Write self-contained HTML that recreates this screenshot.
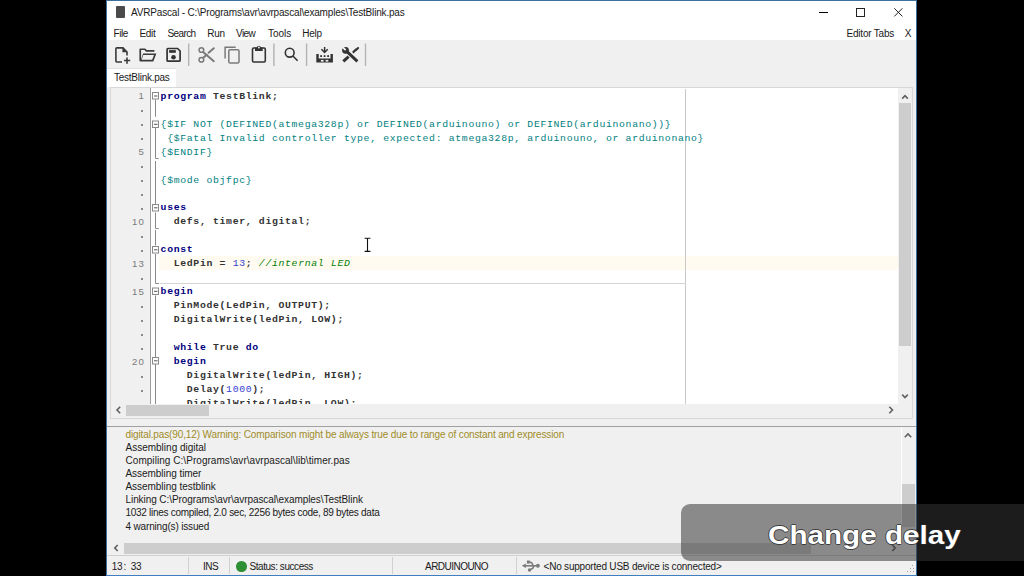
<!DOCTYPE html>
<html><head><meta charset="utf-8">
<style>
*{margin:0;padding:0;box-sizing:border-box}
html,body{width:1024px;height:576px;overflow:hidden;background:#000}
body{position:relative;font-family:"Liberation Sans",sans-serif;color:#000}
.a{position:absolute}
.ui{position:absolute;font-family:"Liberation Sans",sans-serif;font-size:10px;line-height:12px;white-space:pre;color:#1a1a1a}
.code{font-family:"Liberation Mono",monospace;font-size:9.8px;letter-spacing:0.67px;white-space:pre;line-height:13.93px}
.kw{color:#000080;font-weight:bold}
.id{color:#333;font-weight:bold}
.dir{color:#008080}
.num{color:#3340d0}
.cm{color:#008000;font-style:italic}
.lnum{position:absolute;font-family:"Liberation Sans",sans-serif;font-size:9.6px;line-height:13.93px;color:#7a7a7a;text-align:right;letter-spacing:1.2px}
.gdot{position:absolute;width:2px;height:2px;background:#8a8a8a}
svg{position:absolute;overflow:visible}
</style></head><body>
<!-- window frame -->
<div class="a" style="left:106px;top:0;width:811px;height:576px;background:#f0f0f0;border:1px solid #3f6f9f;border-bottom-color:#3f7fbf"></div>
<!-- title bar -->
<div class="a" style="left:107px;top:1px;width:809px;height:21px;background:#fff"></div>
<div class="a" style="left:116px;top:6px;width:9px;height:12px;background:#4a4a4a;border-radius:1px"></div>
<div class="ui" style="left:131px;top:6.5px;letter-spacing:-0.18px">AVRPascal - C:\Programs\avr\avrpascal\examples\TestBlink.pas</div>
<div class="a" style="left:819px;top:12px;width:9px;height:1px;background:#000"></div>
<div class="a" style="left:856px;top:8px;width:8.6px;height:8.6px;border:1px solid #222"></div>
<svg style="left:894px;top:8px" width="9" height="9"><path d="M0.3 0.3L8.4 8.4M8.4 0.3L0.3 8.4" stroke="#222" stroke-width="1"/></svg>
<!-- menu bar -->
<div class="a" style="left:107px;top:22px;width:809px;height:18px;background:#fff"></div>
<div class="ui" style="left:113.5px;top:27.5px;letter-spacing:-0.41px">File</div>
<div class="ui" style="left:139.5px;top:27.5px;letter-spacing:-0.31px">Edit</div>
<div class="ui" style="left:167.5px;top:27.5px;letter-spacing:-0.62px">Search</div>
<div class="ui" style="left:207.2px;top:27.5px;letter-spacing:-0.24px">Run</div>
<div class="ui" style="left:236px;top:27.5px;letter-spacing:-0.59px">View</div>
<div class="ui" style="left:268px;top:27.5px;letter-spacing:0px">Tools</div>
<div class="ui" style="left:302.3px;top:27.5px;letter-spacing:-0.27px">Help</div>
<div class="ui" style="left:846.5px;top:27.5px;letter-spacing:-0.2px">Editor Tabs</div>
<div class="ui" style="left:904.8px;top:27.5px">X</div>
<!-- toolbar (bg is window color) -->
<!-- new file -->
<svg style="left:0;top:0" width="1024" height="576">
 <g fill="none" stroke="#3a3a3a" stroke-width="1.6">
  <path d="M122 62H116.8Q115.9 62 115.9 61.1V48.7Q115.9 47.9 116.8 47.9H123L127 52V55.5"/>
  <path d="M127 57.4V63.7M124 60.5H130.2"/>
 </g>
 <path d="M122.4 47.6L127.6 52.2H122.4Z" fill="#3a3a3a"/>
 <!-- open folder -->
 <path d="M139.4 49.3Q139.4 48.4 140.3 48.4H145.2L146.8 50H154.4V51.7H146L144.5 50.1H141.1V59.6L143.1 53.4H156.4L153.3 61.5H140.3Q139.4 61.5 139.4 60.6Z M141.6 59.8H152.1L154 55.1H143.3Z" fill="#3a3a3a" fill-rule="evenodd"/>
 <!-- save -->
 <g fill="none" stroke="#333" stroke-width="1.7">
  <path d="M167.9 48.5H177.6L180.1 51V60.2Q180.1 61.2 179.1 61.2H168Q167.1 61.2 167.1 60.2V49.4Q167.1 48.5 167.9 48.5Z"/>
 </g>
 <rect x="169.1" y="50.1" width="6.7" height="2.7" fill="#333"/>
 <circle cx="173.5" cy="57.2" r="2.3" fill="#333"/>
 <!-- separators -->
 <rect x="188" y="43.5" width="1.4" height="22.5" fill="#b4b4b4"/>
 <rect x="273.2" y="43.5" width="1.4" height="22.5" fill="#b4b4b4"/>
 <rect x="305.9" y="43.5" width="1.4" height="22.5" fill="#b4b4b4"/>
 <rect x="364.8" y="43.5" width="1.4" height="22.5" fill="#b4b4b4"/>
 <!-- scissors -->
 <g fill="none" stroke="#7a7a7a" stroke-width="1.5">
  <circle cx="201.4" cy="50" r="2.35"/>
  <circle cx="201.4" cy="59.75" r="2.35"/>
 </g>
 <g fill="none" stroke="#7a7a7a" stroke-width="2" stroke-linecap="round">
  <path d="M203.4 52.3L213.8 61.2"/>
  <path d="M203.4 57.6L206.8 54.8"/>
  <path d="M208.6 52.8L213.8 48.2"/>
 </g>
 <!-- copy -->
 <g fill="none" stroke="#7a7a7a" stroke-width="1.5">
  <path d="M225.1 58.4V47.2H235.7"/>
  <rect x="228.8" y="49.8" width="10.2" height="13.2" rx="1.3"/>
 </g>
 <!-- paste -->
 <g fill="none" stroke="#333" stroke-width="1.6">
  <rect x="252.5" y="48" width="12.8" height="14" rx="1.2"/>
 </g>
 <path d="M255 47.4H256.8A2.1 2.1 0 0 1 260.9 47.4H262.7V51H255Z" fill="#333"/>
 <circle cx="258.85" cy="47.5" r="0.9" fill="#f0f0f0"/>
 <!-- search -->
 <g fill="none" stroke="#333" stroke-width="1.6">
  <circle cx="289.7" cy="52.7" r="4.4"/>
  <path d="M292.9 56L297.6 60.8"/>
 </g>
 <!-- upload -->
 <g fill="none" stroke="#333" stroke-width="1.5">
  <path d="M324.6 47V52.4M321.4 49.3L324.6 52.5L327.7 49.3"/>
 </g>
 <path d="M316.3 54H318.7V58.6H330.5V54H332.9V62.6H316.3Z" fill="#333"/>
 <rect x="320.9" y="59.9" width="2.7" height="1.7" fill="#f0f0f0"/>
 <rect x="325.6" y="59.9" width="2.7" height="1.7" fill="#f0f0f0"/>
 <rect x="320.2" y="55.2" width="1.8" height="1.8" fill="#333"/>
 <rect x="323.7" y="55.2" width="1.8" height="1.8" fill="#333"/>
 <rect x="327.2" y="55.2" width="1.8" height="1.8" fill="#333"/>
 <!-- tools -->
 <g fill="none" stroke="#333" stroke-linecap="butt">
  <path d="M347 51.6L357.4 61.3" stroke-width="3"/>
  <path d="M348.6 56.6L343.3 61.4" stroke-width="3"/>
  <path d="M352.8 52.6L356.6 49" stroke-width="2.2"/>
 </g>
 <circle cx="345.5" cy="50.3" r="3.4" fill="#333"/>
 <path d="M343.4 46.6L346.3 49.6L345.1 50.8L342.1 47.9Z" fill="#f0f0f0"/>
 <path d="M355.2 49.6L357.4 47.3Q358.6 46.6 359.1 47.6Q359.3 48.4 358.6 49L356.4 51Z" fill="#333"/>
 </svg>
<!-- tab bar -->
<div class="a" style="left:107px;top:68px;width:69px;height:19px;background:#fff;border-top:1px solid #e0e0e0"></div>
<div class="ui" style="left:114px;top:71.5px;letter-spacing:-0.26px">TestBlink.pas</div>
<!-- editor frame -->
<div class="a" style="left:110px;top:87px;width:803px;height:332px;border:1px solid #d8d8d8;background:#fff"></div>
<div class="a" style="left:111px;top:88px;width:40px;height:316px;background:#f0f0f0"></div>
<div class="a" style="left:150px;top:88px;width:1px;height:316px;background:#a0a0a0"></div>
<!-- v scrollbar -->
<div class="a" style="left:898px;top:88px;width:14px;height:330px;background:#f0f0f0"></div>
<div class="a" style="left:899px;top:103px;width:12px;height:242.5px;background:#cdcdcd"></div>
<svg style="left:0;top:0" width="1024" height="576"><g fill="none" stroke="#606060" stroke-width="1.6"><path d="M902.2 98.6L905 95.6L907.8 98.6"/><path d="M902.2 394.6L905 397.6L907.8 394.6"/></g></svg>
<!-- h scrollbar -->
<div class="a" style="left:111px;top:404px;width:787px;height:14px;background:#f0f0f0"></div>
<div class="a" style="left:126px;top:404.5px;width:83px;height:11.5px;background:#cdcdcd"></div>
<svg style="left:0;top:0" width="1024" height="576"><g fill="none" stroke="#606060" stroke-width="1.6"><path d="M120.2 406.8L117 410L120.2 413.2"/><path d="M889.3 406.8L892.5 410L889.3 413.2"/></g></svg>
<div class="a" style="left:151px;top:89px;width:747px;height:315px;overflow:hidden"><div class="a" style="left:8px;top:167px;width:739px;height:14px;background:#fffbf0"></div><div class="a" style="left:534px;top:0;width:1px;height:315px;background:#c8c8c8"></div><div class="a" style="left:9px;top:194px;width:526px;height:1px;background:#d4d4d4"></div><div class="a code" style="left:9.6px;top:0.75px"><span class="kw">program</span><span class="id"> TestBlink;</span></div><div class="a code" style="left:9.6px;top:28.67px"><span class="dir">{$IF NOT (DEFINED(atmega328p) or DEFINED(arduinouno) or DEFINED(arduinonano))}</span></div><div class="a code" style="left:9.6px;top:42.63px"><span class="dir"> {$Fatal Invalid controller type, expected: atmega328p, arduinouno, or arduinonano}</span></div><div class="a code" style="left:9.6px;top:56.59px"><span class="dir">{$ENDIF}</span></div><div class="a code" style="left:9.6px;top:84.51px"><span class="dir">{$mode objfpc}</span></div><div class="a code" style="left:9.6px;top:112.43px"><span class="kw">uses</span></div><div class="a code" style="left:9.6px;top:126.39px"><span class="id">  defs, timer, digital;</span></div><div class="a code" style="left:9.6px;top:154.31px"><span class="kw">const</span></div><div class="a code" style="left:9.6px;top:168.27px"><span class="id">  LedPin = </span><span class="num">13</span><span class="id">; </span><span class="cm">//internal LED</span></div><div class="a code" style="left:9.6px;top:196.19px"><span class="kw">begin</span></div><div class="a code" style="left:9.6px;top:210.15px"><span class="id">  PinMode(LedPin, OUTPUT);</span></div><div class="a code" style="left:9.6px;top:224.11px"><span class="id">  DigitalWrite(ledPin, LOW);</span></div><div class="a code" style="left:9.6px;top:252.03px"><span class="id">  </span><span class="kw">while</span><span class="id"> True </span><span class="kw">do</span></div><div class="a code" style="left:9.6px;top:265.99px"><span class="id">  </span><span class="kw">begin</span></div><div class="a code" style="left:9.6px;top:279.95px"><span class="id">    DigitalWrite(ledPin, HIGH);</span></div><div class="a code" style="left:9.6px;top:293.91px"><span class="id">    Delay(</span><span class="num">1000</span><span class="id">);</span></div><div class="a code" style="left:9.6px;top:307.87px"><span class="id">    DigitalWrite(ledPin, LOW);</span></div></div><div class="a" style="left:111px;top:89px;width:39px;height:314px;overflow:hidden"><div class="a lnum" style="right:5px;top:0.45px">1</div><div class="a gdot" style="left:30px;top:21px"></div><div class="a gdot" style="left:30px;top:35px"></div><div class="a gdot" style="left:30px;top:49px"></div><div class="a lnum" style="right:5px;top:56.29px">5</div><div class="a gdot" style="left:30px;top:77px"></div><div class="a gdot" style="left:30px;top:91px"></div><div class="a gdot" style="left:30px;top:105px"></div><div class="a gdot" style="left:30px;top:119px"></div><div class="a lnum" style="right:5px;top:126.09px">10</div><div class="a gdot" style="left:30px;top:147px"></div><div class="a gdot" style="left:30px;top:161px"></div><div class="a lnum" style="right:5px;top:167.97px">13</div><div class="a gdot" style="left:30px;top:189px"></div><div class="a lnum" style="right:5px;top:195.89px">15</div><div class="a gdot" style="left:30px;top:217px"></div><div class="a gdot" style="left:30px;top:231px"></div><div class="a gdot" style="left:30px;top:245px"></div><div class="a gdot" style="left:30px;top:259px"></div><div class="a lnum" style="right:5px;top:265.69px">20</div><div class="a gdot" style="left:30px;top:287px"></div><div class="a gdot" style="left:30px;top:301px"></div><div class="a gdot" style="left:30px;top:315px"></div></div><!-- fold tree -->
<svg style="left:0;top:0" width="1024" height="576">
 <g fill="none" stroke="#8a8a8a" stroke-width="1">
  <path d="M155.5 99.5V116.8"/>
  <path d="M155.5 127.8V158.5H158.6"/>
  <path d="M155.5 161V203.8"/>
  <path d="M155.5 212.5V228.5H158.6"/>
  <path d="M155.5 230V245.5"/>
  <path d="M155.5 254V283.5H159"/>
  <path d="M155.5 295.5V404"/>
 </g>
 <g fill="#fff" stroke="#8a8a8a" stroke-width="1">
  <rect x="152.5" y="92.5" width="6" height="6.5"/>
  <rect x="152.5" y="121" width="6" height="6.5"/>
  <rect x="152.5" y="204.5" width="6" height="6.5"/>
  <rect x="152.5" y="246.5" width="6" height="6.5"/>
  <rect x="152.5" y="288" width="6" height="6.5"/>
  <rect x="152.5" y="357.5" width="6" height="6.5"/>
 </g>
 <g stroke="#555" stroke-width="1">
  <path d="M154 96H157.5M154 124.3H157.5M154 207.8H157.5M154 249.8H157.5M154 291.3H157.5M154 360.8H157.5"/>
 </g>
</svg>
<!-- ibeam -->
<svg style="left:0;top:0" width="1024" height="576"><g fill="none" stroke="#111" stroke-width="1.1"><path d="M367.5 238.8V251M364.6 238.3H366.8Q367.5 238.3 367.5 239M370.4 238.3H368.2Q367.5 238.3 367.5 239M364.6 251.4H366.8Q367.5 251.4 367.5 250.7M370.4 251.4H368.2Q367.5 251.4 367.5 250.7"/></g></svg>
<!-- splitter + messages -->
<div class="a" style="left:107px;top:426px;width:809px;height:1px;background:#a0a0a0"></div>
<div class="ui" style="left:125.5px;top:428.80px;color:#a08c28;letter-spacing:-0.13px">digital.pas(90,12) Warning: Comparison might be always true due to range of constant and expression</div>
<div class="ui" style="left:125.5px;top:441.91px">Assembling digital</div>
<div class="ui" style="left:125.5px;top:455.02px;letter-spacing:0.05px">Compiling C:\Programs\avr\avrpascal\lib\timer.pas</div>
<div class="ui" style="left:125.5px;top:468.13px;letter-spacing:-0.05px">Assembling timer</div>
<div class="ui" style="left:125.5px;top:481.24px;letter-spacing:-0.045px">Assembling testblink</div>
<div class="ui" style="left:125.5px;top:494.35px;letter-spacing:-0.075px">Linking C:\Programs\avr\avrpascal\examples\TestBlink</div>
<div class="ui" style="left:125.5px;top:507.46px;letter-spacing:-0.28px">1032 lines compiled, 2.0 sec, 2256 bytes code, 89 bytes data</div>
<div class="ui" style="left:125.5px;top:520.57px;letter-spacing:-0.16px">4 warning(s) issued</div>
<!-- messages v scrollbar -->
<div class="a" style="left:901px;top:427px;width:1px;height:115px;background:#fff"></div>
<div class="a" style="left:902px;top:484px;width:13px;height:43px;background:#cdcdcd"></div>
<svg style="left:0;top:0" width="1024" height="576"><g fill="none" stroke="#606060" stroke-width="1.6"><path d="M904.8 437.2L908 434L911.2 437.2"/></g></svg>
<!-- messages h scrollbar -->
<div class="a" style="left:107px;top:542px;width:809px;height:12px;background:#f0f0f0"></div>
<div class="a" style="left:124px;top:542.5px;width:687px;height:11px;background:#cdcdcd"></div>
<svg style="left:0;top:0" width="1024" height="576"><g fill="none" stroke="#606060" stroke-width="1.6"><path d="M117.7 545L114.8 548L117.7 551"/><path d="M892.3 545L895.2 548L892.3 551"/></g></svg>
<!-- status bar -->
<div class="a" style="left:107px;top:555px;width:809px;height:1px;background:#d0d0d0"></div>
<div class="ui" style="left:111.8px;top:561px;letter-spacing:-0.4px">13</div><div class="ui" style="left:123.6px;top:561px">:</div><div class="ui" style="left:130.8px;top:561px;letter-spacing:-0.4px">33</div>
<div class="a" style="left:188px;top:557px;width:1px;height:17px;background:#d0d0d0"></div>
<div class="ui" style="left:203px;top:561px;letter-spacing:-0.5px">INS</div>
<div class="a" style="left:229px;top:557px;width:1px;height:17px;background:#d0d0d0"></div>
<div class="a" style="left:236px;top:561px;width:10.5px;height:10.5px;border-radius:50%;background:#2f8f33"></div>
<div class="ui" style="left:249.5px;top:561px;letter-spacing:-0.445px">Status: success</div>
<div class="a" style="left:392px;top:557px;width:1px;height:17px;background:#d0d0d0"></div>
<div class="ui" style="left:425px;top:561px;letter-spacing:-0.53px">ARDUINOUNO</div>
<div class="a" style="left:516px;top:557px;width:1px;height:17px;background:#d0d0d0"></div>
<svg style="left:0;top:0" width="1024" height="576"><g fill="#7a7a7a"><path d="M521.8 565.8L525.9 563.6V568.1Z"/><rect x="525.5" y="565" width="11" height="1.6"/><circle cx="537.9" cy="565.8" r="1.95"/><rect x="526.9" y="560.5" width="2.9" height="3.1"/><circle cx="529.5" cy="570" r="1.7"/></g><g fill="none" stroke="#7a7a7a" stroke-width="1.4"><path d="M529.5 562Q532.2 562 533 565.5"/><path d="M530.5 569.5Q533.5 568.5 534 566"/></g></svg>
<div class="ui" style="left:543.5px;top:561px;letter-spacing:-0.2px">&lt;No supported USB device is connected&gt;</div>
<svg style="left:0;top:0" width="1024" height="576"><g fill="#a0a0a0"><rect x="912" y="565" width="1" height="1"/><rect x="910" y="568" width="1" height="1"/><rect x="913" y="568" width="1" height="1"/><rect x="907" y="571" width="1" height="1"/><rect x="910" y="571" width="1" height="1"/><rect x="913" y="571" width="1" height="1"/></g></svg>
<!-- overlay -->
<div class="a" style="left:681px;top:504px;width:400px;height:56.5px;border-radius:9px;background:rgba(52,52,52,0.54)"></div>
<div class="a" style="left:767.5px;top:519px;font-family:'Liberation Sans',sans-serif;font-weight:bold;font-size:26px;line-height:32px;color:#fff;white-space:pre;transform:scaleX(1.14);transform-origin:0 0;text-shadow:0.8px 0 0 rgba(40,40,40,.75),-0.8px 0 0 rgba(40,40,40,.75),0 0.8px 0 rgba(40,40,40,.75),0 -0.8px 0 rgba(40,40,40,.75)">Change delay</div>
</body></html>
